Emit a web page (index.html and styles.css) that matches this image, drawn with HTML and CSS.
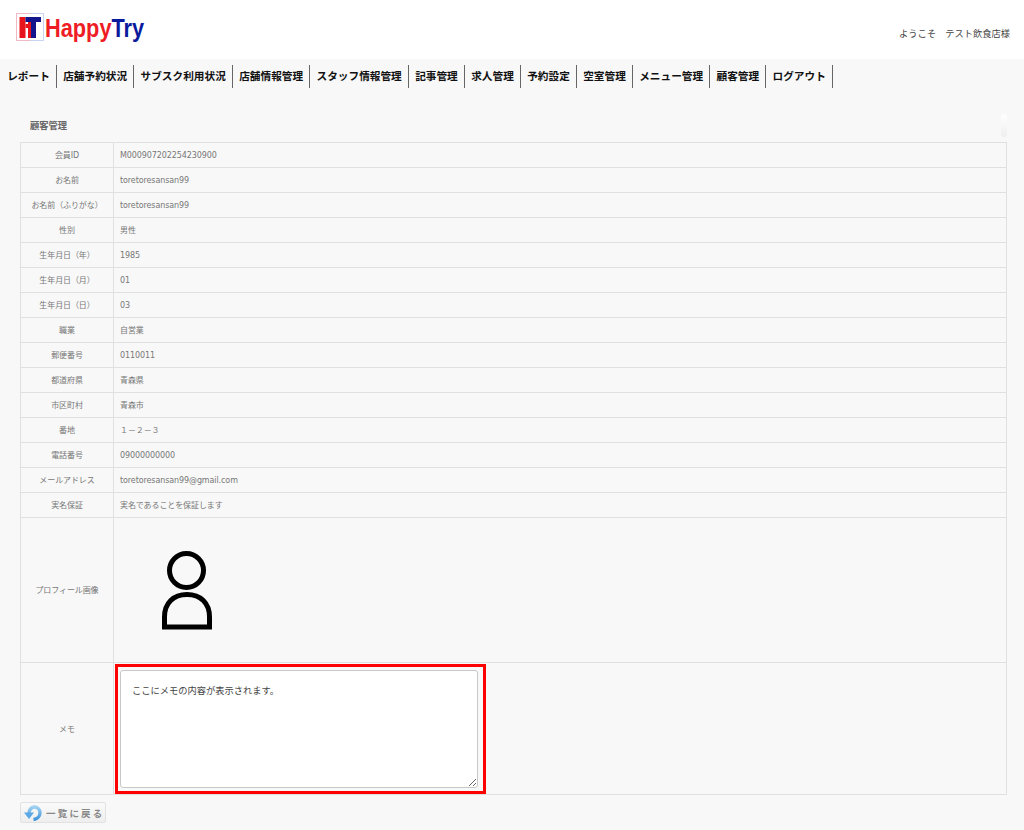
FILE: index.html
```html
<!DOCTYPE html>
<html lang="ja">
<head>
  <meta charset="UTF-8">
  <title>顧客管理</title>
  <link rel="stylesheet" href="styles.css">
</head>
<body>
  <header class="site-header">
    <a class="logo" href="#">
      <svg class="logo-mark" width="28" height="28" viewBox="0 0 28 28">
        <rect x="0.5" y="0.5" width="27" height="27" fill="#fff" stroke="#c9d4f5"/>
        <path d="M14 0.5H0.5V27.5H14" fill="none" stroke="#f2b8c6"/>
        <rect x="3.5" y="4" width="6" height="21" fill="#e8141c"/>
        <rect x="9.5" y="11" width="5.5" height="4" fill="#e8141c"/>
        <rect x="12" y="9" width="3" height="16" fill="#e8141c"/>
        <rect x="9.5" y="4" width="15.5" height="5" fill="#14148c"/>
        <rect x="15" y="9" width="5" height="16" fill="#14148c"/>
      </svg>
      <span class="logo-text"><span class="logo-red">Happy</span><span class="logo-blue">Try</span></span>
    </a>
    <p class="welcome">ようこそ　テスト飲食店様</p>
  </header>

  <nav class="main-nav">
    <a href="#">レポート</a>
    <a href="#">店舗予約状況</a>
    <a href="#">サブスク利用状況</a>
    <a href="#">店舗情報管理</a>
    <a href="#">スタッフ情報管理</a>
    <a href="#">記事管理</a>
    <a href="#">求人管理</a>
    <a href="#">予約設定</a>
    <a href="#">空室管理</a>
    <a href="#">メニュー管理</a>
    <a href="#">顧客管理</a>
    <a href="#">ログアウト</a>
  </nav>

  <main class="content">
    <div class="title-row">
      <h2>顧客管理</h2>
      <span class="title-tab"></span>
    </div>

    <table class="detail-table">
      <tr><th>会員ID</th><td>M000907202254230900</td></tr>
      <tr><th>お名前</th><td>toretoresansan99</td></tr>
      <tr><th>お名前（ふりがな）</th><td>toretoresansan99</td></tr>
      <tr><th>性別</th><td>男性</td></tr>
      <tr><th>生年月日（年）</th><td>1985</td></tr>
      <tr><th>生年月日（月）</th><td>01</td></tr>
      <tr><th>生年月日（日）</th><td>03</td></tr>
      <tr><th>職業</th><td>自営業</td></tr>
      <tr><th>郵便番号</th><td>0110011</td></tr>
      <tr><th>都道府県</th><td>青森県</td></tr>
      <tr><th>市区町村</th><td>青森市</td></tr>
      <tr><th>番地</th><td>１－２－３</td></tr>
      <tr><th>電話番号</th><td>09000000000</td></tr>
      <tr><th>メールアドレス</th><td>toretoresansan99@gmail.com</td></tr>
      <tr><th>実名保証</th><td>実名であることを保証します</td></tr>
      <tr class="photo-row">
        <th>プロフィール画像</th>
        <td>
          <svg class="avatar" width="50" height="79" viewBox="0 0 50 79">
            <circle cx="24.5" cy="19.5" r="17" fill="none" stroke="#000" stroke-width="5"/>
            <path d="M2.5 76V66C2.5 52 11.5 43.5 25 43.5S47.5 52 47.5 66V76Z" fill="none" stroke="#000" stroke-width="5"/>
          </svg>
        </td>
      </tr>
      <tr class="memo-row">
        <th>メモ</th>
        <td>
          <div class="memo-highlight">
            <textarea class="memo-input" readonly>ここにメモの内容が表示されます。</textarea>
          </div>
        </td>
      </tr>
    </table>

    <a class="back-btn" href="#">
      <svg width="18" height="16" viewBox="0 0 18 16">
        <defs>
          <linearGradient id="backIconFill" x1="0" y1="0" x2="0" y2="1">
            <stop offset="0" stop-color="#9fd0f2"/>
            <stop offset="1" stop-color="#3f94dc"/>
          </linearGradient>
        </defs>
        <path d="M5 8.5C5 4.5 7.5 2 10.5 2C13.5 2 16 4.5 16 7.5C16 11.5 13 14 9.5 14.5" fill="none" stroke="url(#backIconFill)" stroke-width="3.4"/>
        <path d="M0 7.5H10L5 14Z" fill="#5aa8e6"/>
      </svg>
      <span>一覧に戻る</span>
    </a>
  </main>
</body>
</html>
```

FILE: styles.css
```css
* {
  margin: 0;
  padding: 0;
  box-sizing: border-box;
}

html, body {
  height: 830px;
  overflow: hidden;
}

body {
  font-family: "Noto Sans CJK JP", "Liberation Sans", sans-serif;
  background-color: #fff;
  color: #777;
}

a {
  text-decoration: none;
}

.site-header {
  height: 59px;
  display: flex;
  justify-content: space-between;
  padding: 13px 14px 0 16px;
}

.logo {
  display: flex;
  align-items: flex-start;
  gap: 1px;
}

.logo-text {
  font-family: "Liberation Sans", sans-serif;
  font-size: 25px;
  font-weight: bold;
  line-height: 30px;
  transform: scaleX(0.87);
  transform-origin: left;
}

.logo-red {
  color: #ee1c25;
}

.logo-blue {
  color: #0a1a9c;
}

.welcome {
  font-size: 9.25px;
  line-height: 14px;
  margin-top: 13px;
  color: #444;
}

.main-nav {
  display: flex;
  background-color: #f8f8f8;
  padding: 6px 0 0 1px;
  height: 29px;
}

.main-nav a {
  color: #111;
  font-size: 10.67px;
  font-weight: bold;
  line-height: 22px;
  height: 23px;
  padding: 0 6.2px;
  border-right: 1px solid #666;
}

.content {
  background-color: #f8f8f8;
  height: 742px;
  padding: 0 17px 0 20px;
}

.title-row {
  display: flex;
  justify-content: space-between;
  height: 54px;
  padding: 30px 0 0 10px;
}

.title-row h2 {
  font-size: 9.25px;
  line-height: 14px;
  font-weight: bold;
  color: #666;
}

.title-tab {
  width: 6px;
  height: 23px;
  margin-top: -4px;
  border-radius: 3px;
  background: linear-gradient(#fff, #efefef);
}

.detail-table {
  width: 100%;
  border-collapse: collapse;
  table-layout: fixed;
  font-family: "DejaVu Sans", "Noto Sans CJK JP", sans-serif;
  font-size: 8px;
  line-height: 10px;
  letter-spacing: -0.1px;
}

.detail-table th, .detail-table td {
  border: 1px solid #e0e0e0;
  height: 25px;
  padding-top: 1px;
  vertical-align: middle;
  font-weight: normal;
}

.detail-table th {
  width: 93px;
  text-align: center;
}

.detail-table td {
  padding-left: 6px;
}

.detail-table .photo-row th, .detail-table .photo-row td {
  height: 145px;
}

.avatar {
  display: block;
  margin-left: 42px;
}

.detail-table .memo-row th, .detail-table .memo-row td {
  height: 132px;
}

.detail-table .memo-row th {
  padding-top: 3px;
}

.detail-table .memo-row td {
  padding: 1px 0 0 1px;
  vertical-align: top;
}

.memo-highlight {
  width: 371px;
  height: 130px;
  border: 3px solid #f00;
  padding: 3px 0 0 2px;
}

.memo-input {
  display: block;
  width: 358px;
  height: 118px;
  border: 1px solid #c8c8c8;
  border-radius: 3px;
  padding: 12px 11px;
  font-family: "Noto Sans CJK JP", sans-serif;
  font-size: 9.25px;
  line-height: 14px;
  color: #444;
  background-color: #fff;
  resize: both;
  outline: none;
}

.back-btn {
  display: inline-flex;
  align-items: center;
  gap: 4px;
  width: 86px;
  height: 21px;
  margin-top: 7px;
  padding-left: 3px;
  border: 1px solid #e2e2e2;
  border-radius: 2px;
  background: linear-gradient(#fafafa, #eee);
  color: #888;
  font-size: 9.5px;
  font-weight: bold;
  letter-spacing: 2.2px;
  white-space: nowrap;
}
```
